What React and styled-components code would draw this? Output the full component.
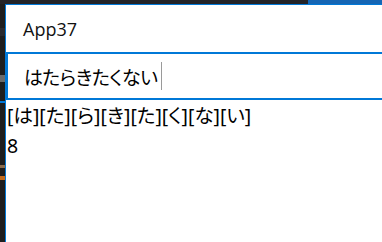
import React from "react";
import styled, { createGlobalStyle } from "styled-components";

const GlobalStyle = createGlobalStyle`
  html, body {
    margin: 0;
    padding: 0;
    background: #1e1e1e;
    overflow: hidden;
  }
`;

const Desktop = styled.div`
  width: 382px;
  height: 242px;
  display: flex;
  flex-direction: column;
  overflow: hidden;
`;

const TopStrip = styled.div`
  height: 4px;
  display: flex;
  flex-shrink: 0;
`;

const StripPart = styled.div`
  height: 100%;
  width: ${(p) => (p.$width ? `${p.$width}px` : "auto")};
  flex: ${(p) => (p.$width ? "none" : 1)};
  background: ${(p) => p.$color};
`;

const Body = styled.div`
  flex: 1;
  display: flex;
  min-height: 0;
`;

const LeftStrip = styled.div`
  width: 5px;
  display: flex;
  flex-direction: column;
  background: #1e1e1e;
`;

const LeftBit = styled.div`
  height: ${(p) => p.$h}px;
  margin-top: ${(p) => p.$top || 0}px;
  background: ${(p) => p.$color};
`;

const Window = styled.div`
  flex: 1;
  background: #ffffff;
  border-top: 1px solid #0078d7;
  border-left: 1px solid #0078d7;
  display: flex;
  flex-direction: column;
  font-family: "Noto Sans", "Noto Sans CJK JP", sans-serif;
  color: #000;
`;

const TitleBar = styled.div`
  height: 47px;
  display: flex;
  align-items: center;
  padding-left: 17px;
  font-size: 18px;
  font-family: "Open Sans", "Noto Sans", sans-serif;
  color: #111;
`;

const TextBox = styled.div`
  height: 44px;
  margin-right: -20px;
  border: 2px solid #0078d7;
  display: flex;
  align-items: center;
  padding-left: 16px;
  font-family: "Noto Sans CJK JP", sans-serif;
  font-feature-settings: "palt";
  font-size: 19px;
  letter-spacing: -0.5px;
`;

const Caret = styled.span`
  display: inline-block;
  width: 1px;
  height: 28px;
  margin-left: 3px;
  background: #9a9a9a;
`;

const Output = styled.div`
  padding-top: 1px;
  padding-left: 1px;
  font-size: 19.5px;
  line-height: 30px;
  font-family: "Noto Sans", "Noto Sans CJK JP", sans-serif;
  font-feature-settings: "palt";
`;

const Line = styled.div`
  white-space: nowrap;
`;

const text = "はたらきたくない";

export default function App() {
  const chars = Array.from(text);
  return (
    <>
      <GlobalStyle />
      <Desktop>
        <TopStrip>
          <StripPart $width={308} $color="#242428" />
          <StripPart $color="#1566b4" />
        </TopStrip>
        <Body>
          <LeftStrip>
            <LeftBit $h={8} $top={24} $color="#2a2a2e" />
            <LeftBit $h={7} $top={39} $color="#6a6a6a" />
            <LeftBit $h={2} $top={19} $color="#0078d7" />
            <LeftBit $h={3} $top={62} $color="#8a6a4a" />
            <LeftBit $h={4} $top={8} $color="#c46a1a" />
          </LeftStrip>
          <Window>
            <TitleBar>App37</TitleBar>
            <TextBox>
              {text}
              <Caret />
            </TextBox>
            <Output>
              <Line>{chars.map((c) => `[${c}]`).join("")}</Line>
              <Line>{chars.length}</Line>
            </Output>
          </Window>
        </Body>
      </Desktop>
    </>
  );
}
